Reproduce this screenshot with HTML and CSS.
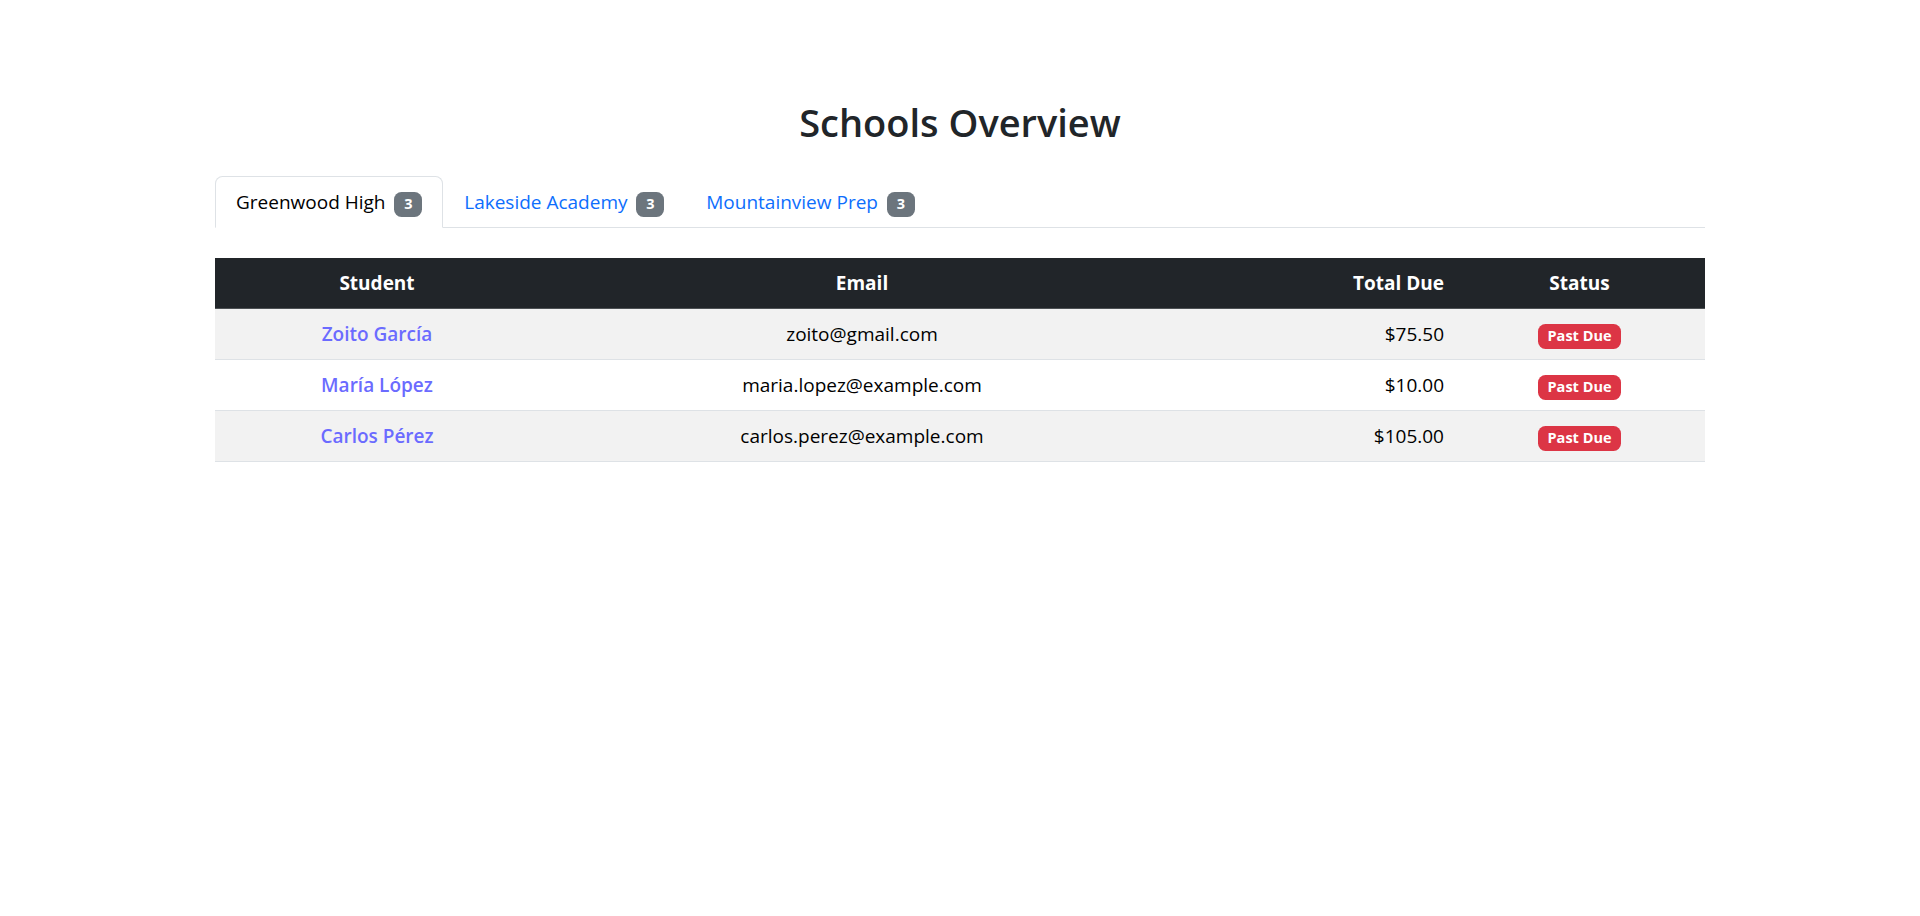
FILE: index.html
```html
<!DOCTYPE html>
<html lang="en">
<head>
<meta charset="utf-8">
<title>Schools Overview</title>
<link rel="stylesheet" href="styles.css">
</head>
<body>
<main class="page">
  <h2 class="title">Schools Overview</h2>
  <ul class="tabs">
    <li><a class="tab active" href="#">Greenwood High <span class="badge badge-gray">3</span></a></li>
    <li><a class="tab" href="#">Lakeside Academy <span class="badge badge-gray">3</span></a></li>
    <li><a class="tab" href="#">Mountainview Prep <span class="badge badge-gray">3</span></a></li>
  </ul>
  <table class="grid">
    <colgroup>
      <col class="c-student">
      <col class="c-email">
      <col class="c-total">
      <col class="c-status">
    </colgroup>
    <thead>
      <tr>
        <th class="center">Student</th>
        <th class="center">Email</th>
        <th class="right">Total Due</th>
        <th class="center">Status</th>
      </tr>
    </thead>
    <tbody>
      <tr>
        <td class="center"><a class="name" href="#">Zoito García</a></td>
        <td class="center">zoito@gmail.com</td>
        <td class="right">$75.50</td>
        <td class="center"><span class="badge badge-red">Past Due</span></td>
      </tr>
      <tr>
        <td class="center"><a class="name" href="#">María López</a></td>
        <td class="center">maria.lopez@example.com</td>
        <td class="right">$10.00</td>
        <td class="center"><span class="badge badge-red">Past Due</span></td>
      </tr>
      <tr>
        <td class="center"><a class="name" href="#">Carlos Pérez</a></td>
        <td class="center">carlos.perez@example.com</td>
        <td class="right">$105.00</td>
        <td class="center"><span class="badge badge-red">Past Due</span></td>
      </tr>
    </tbody>
  </table>
</main>
</body>
</html>
```

FILE: styles.css
```css
html, body {
  margin: 0;
  padding: 0;
  background: #fff;
}
body {
  font-family: "Segoe UI", "Open Sans", "Noto Sans", sans-serif;
  font-size: 19px;
  line-height: 30px;
  color: #212529;
}
.page {
  width: 1490px;
  margin: 0 auto;
  padding-top: 98px;
}
.title {
  margin: 0 0 30px;
  font-size: 38px;
  line-height: 48px;
  font-weight: 600;
  text-align: center;
  color: #212529;
}
.tabs {
  list-style: none;
  margin: 0;
  padding: 0;
  display: flex;
  border-bottom: 1px solid #dee2e6;
}
.tabs li {
  margin-bottom: -1px;
}
.tab {
  display: block;
  padding: 10px 20px;
  border: 1px solid transparent;
  border-radius: 7.5px 7.5px 0 0;
  color: #0d6efd;
  text-decoration: none;
  white-space: nowrap;
}
.tab.active {
  color: #000;
  background: #fff;
  border-color: #dee2e6 #dee2e6 #fff;
}
.badge {
  display: inline-block;
  font-size: 14.5px;
  font-weight: 700;
  line-height: 1;
  padding: 5px 9.75px 5.5px;
  border-radius: 7.5px;
  color: #fff;
  white-space: nowrap;
  vertical-align: baseline;
}
.badge-gray {
  background: #6c757d;
  margin-left: 4px;
}
.badge-red {
  background: #dc3545;
}
.grid {
  margin-top: 30px;
  width: 100%;
  border-collapse: collapse;
  table-layout: fixed;
  color: #000;
}
.c-student { width: 324px; }
.c-email { width: 646px; }
.c-total { width: 269px; }
.c-status { width: 251px; }
.grid th,
.grid td {
  padding: 10px;
  border-bottom: 1px solid #dee2e6;
}
.grid thead th {
  background: #212529;
  color: #fff;
  font-weight: 700;
  border-bottom-color: #4d5154;
}
.grid tbody tr:nth-child(odd) td {
  background: #f2f2f2;
}
.center { text-align: center; }
.right { text-align: right; }
.name {
  color: #6b6bff;
  font-weight: 600;
  text-decoration: none;
}
```
